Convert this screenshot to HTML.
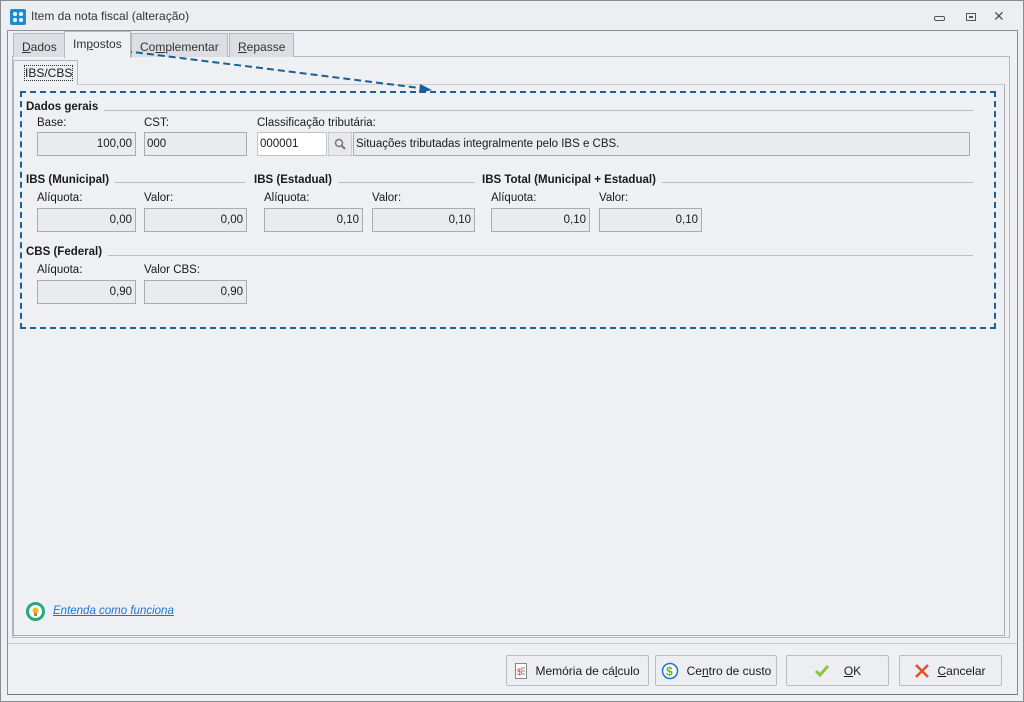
<!DOCTYPE html>
<html><head><meta charset="utf-8"><style>
*{box-sizing:border-box;margin:0;padding:0}
body{width:1024px;height:702px;background:#eff0f4;font-family:"Liberation Sans",sans-serif;font-size:11.5px;color:#1a1a1a;position:relative;overflow:hidden}
.a{position:absolute}
.win{left:0;top:0;width:1024px;height:702px;border:1px solid #8a8d92}
.f{position:absolute;height:24px;background:#e9ebef;border:1px solid #a9acb1;text-align:right;padding:5px 3px 0 0;font-size:11.5px}
.lbl{position:absolute;font-size:11.5px}
.h{position:absolute;font-weight:bold;font-size:11.5px;background:#eff0f4;padding-right:6px}
.ln{position:absolute;height:1px;background:#b9bcc1}
.tab{position:absolute;top:33px;height:24px;border:1px solid #b5b8bd;border-bottom:none;background:#dcdee3;padding:6px 8px 0;font-size:12px;color:#333}
.btn{position:absolute;top:655px;height:31px;border:1px solid #b9bcc1;background:#eceef2;border-radius:2px;font-size:12px;display:flex;align-items:center;justify-content:center;gap:8px;white-space:nowrap}
</style></head><body>
<div class="a win"></div>
<div class="a" style="left:1px;top:1px;width:1022px;height:29px;background:#eceef2"></div>
<svg class="a" style="left:10px;top:9px" width="16" height="16"><rect width="16" height="16" rx="2" fill="#1c8ad6"/><circle cx="5" cy="5" r="2" fill="#fff"/><circle cx="11" cy="5" r="2" fill="#fff"/><circle cx="5" cy="11" r="2" fill="#fff"/><circle cx="11" cy="11" r="2" fill="#fff"/></svg>
<div class="a" style="left:31px;top:9px;font-size:12px;color:#333">Item da nota fiscal (alteração)</div>
<div class="a" style="left:934px;top:16px;width:11px;height:5px;border:1px solid #555;border-radius:2px"></div>
<div class="a" style="left:966px;top:13px;width:10px;height:8px;border:1px solid #555"></div><div class="a" style="left:969px;top:16px;width:4px;height:2px;border:1px solid #555"></div>
<div class="a" style="left:993px;top:8px;font-size:14px;color:#555">✕</div>
<div class="a" style="left:7px;top:30px;width:1011px;height:665px;border:1px solid #8a8d92;border-bottom-color:#777"></div>
<div class="a" style="left:8px;top:643px;width:1009px;height:1px;background:#c9ccd1"></div>
<div class="a" style="left:12px;top:56px;width:998px;height:582px;border:1px solid #b5b8bd;background:#eff0f4"></div>
<div class="tab" style="left:13px"><u>D</u>ados</div>
<div class="tab" style="left:64px;top:31px;height:27px;background:#eff0f4;border-color:#b5b8bd;z-index:2;padding-top:5px">Im<u>p</u>ostos</div>
<div class="tab" style="left:131px">Co<u>m</u>plementar</div>
<div class="tab" style="left:229px"><u>R</u>epasse</div>
<div class="a" style="left:13px;top:84px;width:992px;height:552px;border:1px solid #a9acb1;border-top-color:#c9ccd1"></div>
<div class="a" style="left:13px;top:60px;width:65px;height:25px;border:1px solid #b5b8bd;border-bottom:none;background:#eff0f4;padding:5px 0 0 11px;font-size:12px"><span style="outline:1px dotted #333">IBS/CBS</span></div>
<div class="a" style="left:20px;top:91px;width:976px;height:238px;border:2px dashed #1a6096"></div>
<svg class="a" style="left:120px;top:45px" width="320" height="50"><path d="M5 6 L300 43" stroke="#1a6096" stroke-width="2" stroke-dasharray="7 4" fill="none"/><path d="M300 39 L312 45 L299 48Z" fill="#1a6096"/></svg>
<div class="ln" style="left:26px;top:110px;width:947px"></div>
<div class="h" style="left:26px;top:101px">Dados gerais</div>
<div class="lbl" style="left:37px;top:117px">Base:</div>
<div class="lbl" style="left:144px;top:117px">CST:</div>
<div class="lbl" style="left:257px;top:117px">Classificação tributária:</div>
<div class="f" style="left:37px;top:132px;width:99px">100,00</div>
<div class="f" style="left:144px;top:132px;width:103px;text-align:left;padding-left:2px">000</div>
<div class="f" style="left:257px;top:132px;width:70px;background:#fff;border-color:#c0c3c8;text-align:left;padding-left:2px">000001</div>
<div class="f" style="left:328px;top:132px;width:24px;border-color:#c9ccd1;background:#e7e9ed"></div>
<svg class="a" style="left:334px;top:138px" width="12" height="12"><circle cx="5" cy="5" r="3.5" stroke="#777" stroke-width="1.5" fill="none"/><path d="M7.5 7.5 L11 11" stroke="#777" stroke-width="2"/></svg>
<div class="f" style="left:353px;top:132px;width:617px;text-align:left;padding-left:2px">Situações tributadas integralmente pelo IBS e CBS.</div>
<div class="ln" style="left:26px;top:182px;width:219px"></div>
<div class="ln" style="left:254px;top:182px;width:221px"></div>
<div class="ln" style="left:482px;top:182px;width:491px"></div>
<div class="h" style="left:26px;top:174px">IBS (Municipal)</div>
<div class="h" style="left:254px;top:174px">IBS (Estadual)</div>
<div class="h" style="left:482px;top:174px">IBS Total (Municipal + Estadual)</div>
<div class="lbl" style="left:37px;top:192px">Alíquota:</div>
<div class="lbl" style="left:144px;top:192px">Valor:</div>
<div class="lbl" style="left:264px;top:192px">Alíquota:</div>
<div class="lbl" style="left:372px;top:192px">Valor:</div>
<div class="lbl" style="left:491px;top:192px">Alíquota:</div>
<div class="lbl" style="left:599px;top:192px">Valor:</div>
<div class="f" style="left:37px;top:208px;width:99px">0,00</div>
<div class="f" style="left:144px;top:208px;width:103px">0,00</div>
<div class="f" style="left:264px;top:208px;width:99px">0,10</div>
<div class="f" style="left:372px;top:208px;width:103px">0,10</div>
<div class="f" style="left:491px;top:208px;width:99px">0,10</div>
<div class="f" style="left:599px;top:208px;width:103px">0,10</div>
<div class="ln" style="left:26px;top:255px;width:947px"></div>
<div class="h" style="left:26px;top:246px">CBS (Federal)</div>
<div class="lbl" style="left:37px;top:264px">Alíquota:</div>
<div class="lbl" style="left:144px;top:264px">Valor CBS:</div>
<div class="f" style="left:37px;top:280px;width:99px">0,90</div>
<div class="f" style="left:144px;top:280px;width:103px">0,90</div>
<svg class="a" style="left:26px;top:602px" width="19" height="19"><circle cx="9.5" cy="9.5" r="8" stroke="#2aa87a" stroke-width="3" fill="#fff"/><circle cx="9.5" cy="8.5" r="3" fill="#f2b915"/><rect x="8" y="11" width="3" height="3" fill="#b08a2a"/></svg>
<div class="a" style="left:53px;top:605px;color:#1a73d6;font-style:italic;text-decoration:underline;font-size:11.5px">Entenda como funciona</div>
<div class="btn" style="left:506px;width:143px"><svg width="12" height="16"><rect x=".5" y=".5" width="11" height="15" fill="#fff" stroke="#888"/><text x="2" y="12" font-size="9" fill="#d33">$</text><path d="M6 5h4M6 8h4M6 11h4" stroke="#888"/></svg><span>Memória de cá<u>l</u>culo</span></div>
<div class="btn" style="left:655px;width:122px"><svg width="18" height="18"><circle cx="9" cy="9" r="7.5" stroke="#1a73d6" stroke-width="1.5" fill="#fff"/><text x="5" y="13.5" font-size="12" font-weight="bold" fill="#6bb52a" font-family="Liberation Sans">$</text></svg><span>Ce<u>n</u>tro de custo</span></div>
<div class="btn" style="left:786px;width:103px;gap:14px"><svg width="16" height="14"><path d="M2 7 L6 11 L14 2" stroke="#8cc63f" stroke-width="3" fill="none"/></svg><span><u>O</u>K</span></div>
<div class="btn" style="left:899px;width:103px"><svg width="14" height="14"><path d="M1 1L13 13M13 1L1 13" stroke="#e0502a" stroke-width="2.5"/></svg><span><u>C</u>ancelar</span></div>
</body></html>
